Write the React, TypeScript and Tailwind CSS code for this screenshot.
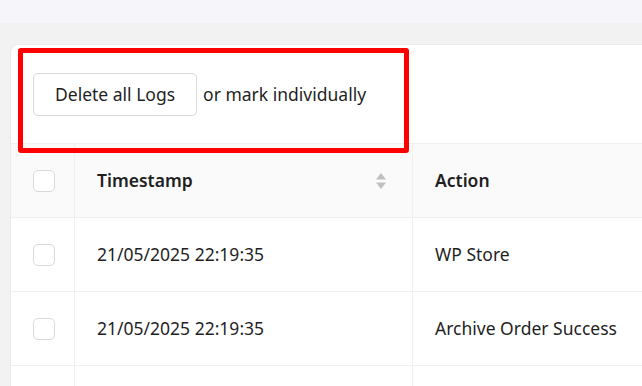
import React from "react";

const rows = [
  { time: "21/05/2025 22:19:35", action: "WP Store" },
  { time: "21/05/2025 22:19:35", action: "Archive Order Success" },
  { time: "", action: "" },
];

function Box() {
  return <div className="w-[22px] h-[22px] rounded-[5px] border border-[#d9d9d9] bg-white" />;
}

function SortIcon() {
  return (
    <svg width="12" height="18" viewBox="0 0 12 18" fill="#bfbfbf">
      <path d="M6 1 L11 7.5 H1 Z" />
      <path d="M6 17 L11 10.5 H1 Z" />
    </svg>
  );
}

export default function App() {
  return (
    <div
      className="relative w-[642px] h-[386px] overflow-hidden bg-[#f2f2f2] text-[#1f1f1f]"
      style={{ fontFamily: '"Noto Sans", "Open Sans", sans-serif' }}
    >
      <div className="h-[23px] bg-[#f5f5fa]" />
      <div className="ml-[10px] mt-[21px] bg-white rounded-tl-lg border-t border-l border-[#ebebeb]">
        <div className="flex items-center h-[98px] pl-[22px]">
          <button className="h-[43px] px-[21px] rounded-[5px] border border-[#d9d9d9] bg-white text-[17.5px] text-[#1f1f1f]">
            Delete all Logs
          </button>
          <span className="ml-[6px] text-[17.5px]">or mark individually</span>
        </div>
        <div className="flex h-[75px] bg-[#fafafa] border-t border-b border-[#f0f0f0]">
          <div className="w-[64px] flex items-center pl-[22px] border-r border-[#f0f0f0]">
            <Box />
          </div>
          <div className="w-[338px] flex items-center justify-between pl-[22px] pr-[25px] border-r border-[#f0f0f0]">
            <span className="text-[17.5px] font-semibold">Timestamp</span>
            <SortIcon />
          </div>
          <div className="flex-1 flex items-center pl-[22px]">
            <span className="text-[17.5px] font-semibold">Action</span>
          </div>
        </div>
        {rows.map((r, i) => (
          <div key={i} className="flex h-[74px] border-b border-[#f0f0f0]">
            <div className="w-[64px] flex items-center pl-[22px] border-r border-[#f0f0f0]">
              {r.time && <Box />}
            </div>
            <div className="w-[338px] flex items-center pl-[22px] border-r border-[#f0f0f0] text-[17.5px]">
              {r.time}
            </div>
            <div className="flex-1 flex items-center pl-[22px] text-[17.5px]">{r.action}</div>
          </div>
        ))}
      </div>
      <div className="absolute left-[18px] top-[48px] w-[391px] h-[105px] border-[5px] border-[#ff0000] rounded-[3px]" />
    </div>
  );
}
